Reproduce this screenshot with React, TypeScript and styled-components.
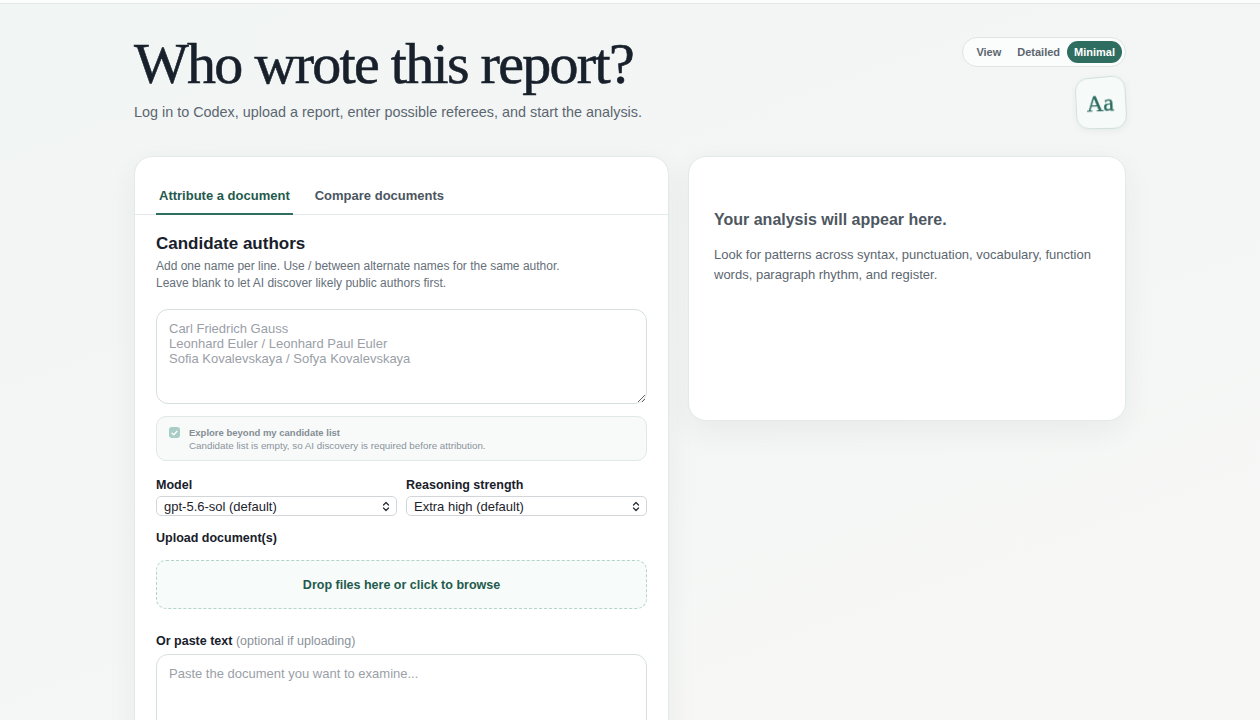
import React from "react";
import styled, { createGlobalStyle } from "styled-components";

const GlobalStyle = createGlobalStyle`
  * { box-sizing: border-box; }
  html, body {
    margin: 0;
    padding: 0;
  }
  body {
    font-family: "Liberation Sans", Arial, sans-serif;
    color: #1c232b;
    background: linear-gradient(160deg, #f1f5f4 0%, #f4f6f5 55%, #f8f8f6 100%);
    min-height: 100vh;
    overflow: hidden;
  }
`;

const TopStrip = styled.div`
  height: 4px;
  background: #fbfcfc;
  border-bottom: 1px solid #e4e8e8;
`;

const Page = styled.main`
  max-width: 992px;
  margin: 0 auto;
  padding-top: 28px;
`;

const Header = styled.header`
  display: flex;
  justify-content: space-between;
  align-items: flex-start;
`;

const TitleBlock = styled.div`
  display: flex;
  flex-direction: column;
`;

const Title = styled.h1`
  margin: 0;
  font-family: "Liberation Serif", "Times New Roman", serif;
  font-weight: 400;
  font-size: 58px;
  line-height: 64px;
  letter-spacing: -1.7px;
  color: #18202b;
  -webkit-text-stroke: 0.6px #18202b;
`;

const Subtitle = styled.p`
  margin: 6px 0 0;
  font-size: 14.4px;
  line-height: 20px;
  color: #5c6670;
`;

const Controls = styled.div`
  display: flex;
  flex-direction: column;
  align-items: flex-end;
  gap: 10px;
  padding-top: 5px;
`;

const Toggle = styled.div`
  display: flex;
  align-items: center;
  height: 30px;
  padding: 3px;
  border: 1px solid #dde4e3;
  border-radius: 15px;
  background: #fbfcfc;
`;

const ToggleItem = styled.span<{ $active?: boolean; $label?: boolean }>`
  display: inline-flex;
  align-items: center;
  height: 22px;
  padding: 0 7px;
  border-radius: 11px;
  font-size: 11px;
  font-weight: 700;
  color: ${(p) => (p.$active ? "#ffffff" : "#5d6670")};
  background: ${(p) => (p.$active ? "#2f6d61" : "transparent")};
  margin-left: ${(p) => (p.$label ? "3px" : "0")};
  margin-right: ${(p) => (p.$label ? "2px" : "0")};
`;

const FontButton = styled.div`
  width: 52px;
  height: 52px;
  border: 1px solid #cfe0dc;
  border-radius: 13px;
  background: #f6fbfa;
  display: flex;
  align-items: center;
  justify-content: center;
  font-family: "Liberation Serif", "Times New Roman", serif;
  font-size: 24px;
  color: #2b6c5f;
  -webkit-text-stroke: 0.4px #2b6c5f;
  transform: perspective(160px) rotateY(-14deg) rotate(-3deg);
  box-shadow: 0 2px 6px rgba(30, 60, 55, 0.06);
`;

const Columns = styled.div`
  display: grid;
  grid-template-columns: 535px 438px;
  gap: 19px;
  align-items: start;
  margin-top: 27px;
`;

const Card = styled.section`
  background: #ffffff;
  border: 1px solid #e2e9e7;
  border-radius: 18px;
  box-shadow: 0 10px 30px rgba(30, 55, 50, 0.06);
`;

const FormCard = styled(Card)`
  min-height: 600px;
`;

const Tabs = styled.nav`
  display: flex;
  gap: 19px;
  padding: 0 21px;
  height: 58px;
  align-items: flex-end;
  border-bottom: 1px solid #e4eae9;
`;

const Tab = styled.button<{ $active?: boolean }>`
  border: none;
  background: none;
  font-family: inherit;
  font-size: 13px;
  font-weight: 700;
  padding: 0 3px 10px;
  margin-bottom: -1px;
  color: ${(p) => (p.$active ? "#1f5a4d" : "#4b5560")};
  border-bottom: 2px solid ${(p) => (p.$active ? "#2f6d61" : "transparent")};
`;

const FormBody = styled.div`
  padding: 19px 21px 0;
  display: flex;
  flex-direction: column;
`;

const SectionTitle = styled.h2`
  margin: 0;
  font-size: 17px;
  line-height: 20px;
  font-weight: 700;
  color: #18202b;
`;

const Help = styled.p`
  margin: 4px 0 0;
  font-size: 12px;
  line-height: 17px;
  color: #66707a;
`;

const TextArea = styled.textarea<{ $height: number }>`
  display: block;
  width: 100%;
  height: ${(p) => p.$height}px;
  margin-top: 17px;
  padding: 11px 12px;
  border: 1px solid #d6e0de;
  border-radius: 12px;
  font-family: "Liberation Sans", Arial, sans-serif;
  font-size: 13px;
  line-height: 15px;
  color: #1c232b;
  resize: vertical;
  outline: none;
  &::placeholder {
    color: #9aa0a7;
  }
`;

const PasteArea = styled(TextArea)`
  margin-top: 5px;
`;

const OptionBox = styled.label`
  display: flex;
  gap: 9px;
  margin-top: 12px;
  padding: 9px 12px 8px;
  border: 1px solid #e0e9e7;
  border-radius: 10px;
  background: #f7faf9;
`;

const CheckMark = styled.span`
  flex: none;
  width: 11px;
  height: 11px;
  margin-top: 1px;
  border-radius: 3px;
  background: #a7cdc5;
  display: flex;
  align-items: center;
  justify-content: center;
`;

const OptionText = styled.div`
  display: flex;
  flex-direction: column;
  font-size: 9.8px;
  line-height: 13px;
  color: #8b939b;
  & strong {
    font-size: 9.5px;
    font-weight: 700;
    color: #858d95;
  }
`;

const FieldRow = styled.div`
  display: grid;
  grid-template-columns: 1fr 1fr;
  gap: 9px;
  margin-top: 16px;
`;

const Field = styled.div`
  display: flex;
  flex-direction: column;
`;

const Label = styled.div<{ $top?: number }>`
  font-size: 12.5px;
  line-height: 16px;
  font-weight: 700;
  color: #18202b;
  margin-top: ${(p) => p.$top ?? 0}px;
  & span {
    font-weight: 400;
    color: #8a9199;
  }
`;

const Select = styled.div`
  display: flex;
  align-items: center;
  justify-content: space-between;
  height: 20px;
  margin-top: 3px;
  padding: 0 6px 0 7px;
  border: 1px solid #d3d6d8;
  border-radius: 5px;
  background: #ffffff;
  font-size: 13px;
  color: #1c232b;
`;

const DropZone = styled.div`
  margin-top: 14px;
  height: 49px;
  border: 1.5px dashed #b3d3cb;
  border-radius: 10px;
  background: #f7fbfa;
  display: flex;
  align-items: center;
  justify-content: center;
  font-size: 12.5px;
  font-weight: 700;
  color: #1f5a4d;
`;

const ResultCard = styled(Card)`
  height: 265px;
  padding: 53px 25px 0;
`;

const ResultTitle = styled.h3`
  margin: 0;
  font-size: 16px;
  line-height: 20px;
  font-weight: 700;
  color: #4d5761;
`;

const ResultText = styled.p`
  margin: 15px 0 0;
  font-size: 13px;
  line-height: 20px;
  color: #5c6670;
`;

const Chevrons = () => (
  <svg width="8" height="11" viewBox="0 0 8 11" fill="none" stroke="#2a2f35" strokeWidth="1.3" strokeLinecap="round" strokeLinejoin="round">
    <path d="M1.5 4 L4 1.5 L6.5 4" />
    <path d="M1.5 7 L4 9.5 L6.5 7" />
  </svg>
);

export default function App() {
  return (
    <>
      <GlobalStyle />
      <TopStrip />
      <Page>
        <Header>
          <TitleBlock>
            <Title>Who wrote this report?</Title>
            <Subtitle>
              Log in to Codex, upload a report, enter possible referees, and start the analysis.
            </Subtitle>
          </TitleBlock>
          <Controls>
            <Toggle>
              <ToggleItem $label>View</ToggleItem>
              <ToggleItem>Detailed</ToggleItem>
              <ToggleItem $active>Minimal</ToggleItem>
            </Toggle>
            <FontButton>Aa</FontButton>
          </Controls>
        </Header>

        <Columns>
          <FormCard>
            <Tabs>
              <Tab $active>Attribute a document</Tab>
              <Tab>Compare documents</Tab>
            </Tabs>
            <FormBody>
              <SectionTitle>Candidate authors</SectionTitle>
              <Help>
                Add one name per line. Use / between alternate names for the same author.
                <br />
                Leave blank to let AI discover likely public authors first.
              </Help>
              <TextArea
                $height={95}
                placeholder={"Carl Friedrich Gauss\nLeonhard Euler / Leonhard Paul Euler\nSofia Kovalevskaya / Sofya Kovalevskaya"}
              />
              <OptionBox>
                <CheckMark>
                  <svg width="7" height="6" viewBox="0 0 7 6" fill="none" stroke="#ffffff" strokeWidth="1.3" strokeLinecap="round" strokeLinejoin="round">
                    <path d="M1 3.2 L2.8 4.8 L6 1.2" />
                  </svg>
                </CheckMark>
                <OptionText>
                  <strong>Explore beyond my candidate list</strong>
                  <span>Candidate list is empty, so AI discovery is required before attribution.</span>
                </OptionText>
              </OptionBox>
              <FieldRow>
                <Field>
                  <Label>Model</Label>
                  <Select>
                    gpt-5.6-sol (default)
                    <Chevrons />
                  </Select>
                </Field>
                <Field>
                  <Label>Reasoning strength</Label>
                  <Select>
                    Extra high (default)
                    <Chevrons />
                  </Select>
                </Field>
              </FieldRow>
              <Label $top={14}>Upload document(s)</Label>
              <DropZone>Drop files here or click to browse</DropZone>
              <Label $top={24}>
                Or paste text <span>(optional if uploading)</span>
              </Label>
              <PasteArea $height={120} placeholder="Paste the document you want to examine..." />
            </FormBody>
          </FormCard>

          <ResultCard>
            <ResultTitle>Your analysis will appear here.</ResultTitle>
            <ResultText>
              Look for patterns across syntax, punctuation, vocabulary, function words, paragraph rhythm, and register.
            </ResultText>
          </ResultCard>
        </Columns>
      </Page>
    </>
  );
}
